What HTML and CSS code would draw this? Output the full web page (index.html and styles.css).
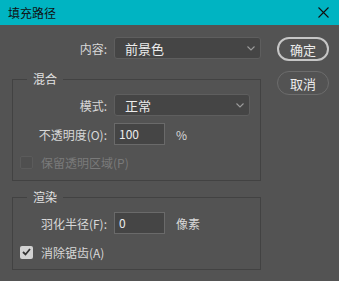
FILE: index.html
```html
<!DOCTYPE html>
<html lang="zh-CN">

<head>
    <meta charset="UTF-8">
    <title>填充路径</title>
    <link rel="stylesheet" href="styles.css">
</head>

<body>
    <div class="titlebar">
        <span class="title">填充路径</span>
        <svg class="close" width="11" height="11" viewBox="0 0 11 11">
            <path d="M0.5 0.5 L10.5 10.5 M10.5 0.5 L0.5 10.5" stroke="#111" stroke-width="1.1" fill="none" />
        </svg>
    </div>

    <div class="dialog">
        <div class="options">
            <div class="row">
                <label class="lbl lbl-out">内容:</label>
                <div class="select select-wide">
                    <span>前景色</span>
                    <svg width="8" height="5" viewBox="0 0 8 5">
                        <path d="M0.5 0.5 L4 4 L7.5 0.5" stroke="#9c9c9c" stroke-width="1.1" fill="none" />
                    </svg>
                </div>
            </div>

            <fieldset class="group group-blend">
                <legend>混合</legend>
                <div class="row row-first">
                    <label class="lbl">模式:</label>
                    <div class="select select-mode">
                        <span>正常</span>
                        <svg width="8" height="5" viewBox="0 0 8 5">
                            <path d="M0.5 0.5 L4 4 L7.5 0.5" stroke="#9c9c9c" stroke-width="1.1" fill="none" />
                        </svg>
                    </div>
                </div>
                <div class="row row-next">
                    <label class="lbl">不透明度(O):</label>
                    <div class="field">100</div>
                    <span class="unit">%</span>
                </div>
                <div class="check check-disabled">
                    <span class="box"></span>
                    <span>保留透明区域(P)</span>
                </div>
            </fieldset>

            <fieldset class="group group-render">
                <legend>渲染</legend>
                <div class="row row-first">
                    <label class="lbl">羽化半径(F):</label>
                    <div class="field">0</div>
                    <span class="unit">像素</span>
                </div>
                <div class="check check-on">
                    <span class="box">
                        <svg width="9" height="8" viewBox="0 0 9 8">
                            <path d="M1 4 L3.5 6.5 L8 1" stroke="#333" stroke-width="1.8" fill="none" />
                        </svg>
                    </span>
                    <span>消除锯齿(A)</span>
                </div>
            </fieldset>
        </div>

        <div class="buttons">
            <button class="btn btn-ok">确定</button>
            <button class="btn">取消</button>
        </div>
    </div>
</body>

</html>
```

FILE: styles.css
```css
* {
    box-sizing: border-box;
}

body {
    margin: 0;
    width: 339px;
    height: 281px;
    background-color: #535353;
    font-family: "Noto Sans CJK SC", "Noto Sans", sans-serif;
    font-size: 12px;
    color: #d8d8d8;
    overflow: hidden;
}

.titlebar {
    height: 25px;
    background-color: #00b4c2;
    display: flex;
    align-items: center;
    justify-content: space-between;
    padding: 0 10px 0 8px;
}

.title {
    color: #111;
    font-size: 12px;
    line-height: 16px;
}

.dialog {
    display: flex;
    padding: 12px 0 0 12px;
    gap: 16px;
}

.options {
    width: 249px;
}

.row {
    display: flex;
    align-items: center;
    gap: 7px;
    height: 22px;
}

.lbl {
    width: 94px;
    text-align: right;
    white-space: nowrap;
}

.lbl-out {
    width: 95px;
}

.select {
    height: 22px;
    background-color: #454545;
    border: 1px solid #5e5e5e;
    border-radius: 3px;
    display: flex;
    align-items: center;
    justify-content: space-between;
    padding: 0 5px 0 10px;
    color: #ececec;
    font-size: 13px;
}

.select-wide {
    width: 147px;
}

.select-mode {
    width: 136px;
}

.field {
    width: 51px;
    height: 22px;
    background-color: #454545;
    border: 1px solid #6a6a6a;
    padding: 0 4px;
    line-height: 20px;
    color: #ececec;
    font-size: 12px;
}

.unit {
    margin-left: 4px;
}

.group {
    margin: 0;
    padding: 0 0 10px 0;
    border: 1px solid #424242;
    min-width: 0;
}

.group legend {
    margin-left: 14px;
    padding: 0 6px;
    line-height: 16px;
    color: #e2e2e2;
}

.group-blend {
    margin-top: 12px;
}

.group-render {
    margin-top: 8px;
    padding-bottom: 9px;
}

.row-first {
    margin-top: 7px;
}

.row-next {
    margin-top: 7px;
}

.check {
    display: flex;
    align-items: center;
    gap: 8px;
    height: 16px;
    margin: 9px 0 0 7px;
}

.group-render .check {
    margin-top: 10px;
}

.box {
    width: 13px;
    height: 13px;
    border-radius: 2px;
    display: flex;
    align-items: center;
    justify-content: center;
}

.check-disabled {
    color: #7a7a7a;
}

.check-disabled .box {
    background-color: #4f4f4f;
    border: 1px solid #5b5b5b;
}

.check-on .box {
    background-color: #d2d2d2;
}

.buttons {
    display: flex;
    flex-direction: column;
    gap: 10px;
}

.btn {
    width: 52px;
    height: 24px;
    border-radius: 12px;
    background-color: transparent;
    border: 1px solid #6c6c6c;
    color: #ececec;
    font-family: "Noto Sans CJK SC", sans-serif;
    font-size: 13px;
    padding: 0;
    cursor: pointer;
}

.btn-ok {
    border: 2px solid #c6c6c6;
}
```
